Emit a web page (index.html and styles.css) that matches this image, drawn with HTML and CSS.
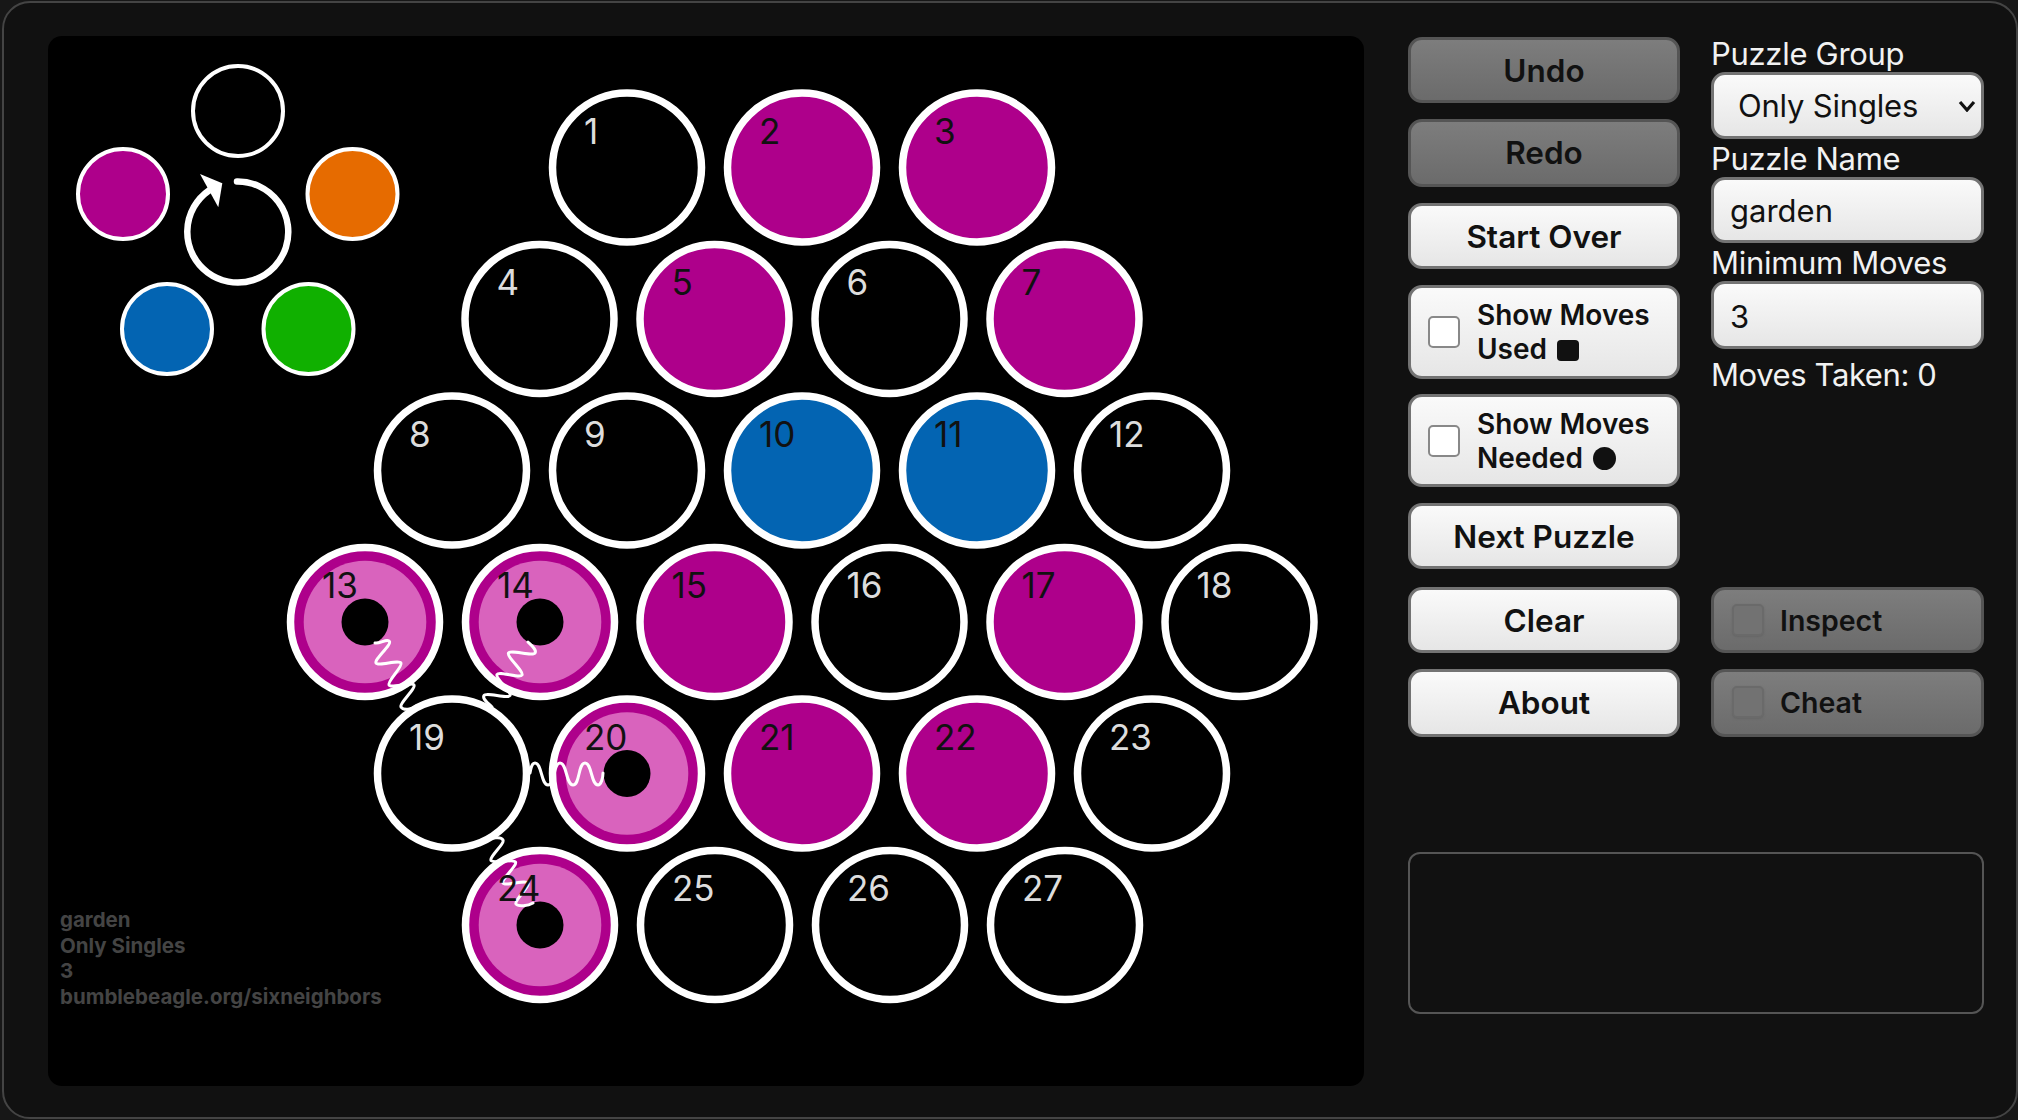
FILE: index.html
```html
<!DOCTYPE html>
<html lang="en">
<head>
  <meta charset="UTF-8">
  <title>Six Neighbors</title>
  <link rel="stylesheet" href="styles.css">
</head>
<body>
  <div class="ventana">
    <div class="tablero">
      <svg class="lienzo" viewBox="48 36 1316 1050" width="1316" height="1050">
        <!-- colour picker -->
        <circle class="paleta" cx="238" cy="111" r="45"/>
        <circle class="paleta magenta" cx="123" cy="194" r="45"/>
        <circle class="paleta naranja" cx="352.5" cy="194" r="45"/>
        <circle class="paleta azul" cx="167" cy="329" r="45"/>
        <circle class="paleta verde" cx="308.500" cy="329" r="45"/>
        <path class="giro" d="M237,181.500 A50.500,50.500 0 1 1 209,190.500"/>
        <polygon class="punta" points="200,174 222.300,183.300 218.300,207.300"/>

        <!-- cells -->
        <circle class="celda" cx="627" cy="167.500" r="74.500"/>
        <circle class="celda magenta" cx="802" cy="167.500" r="74.500"/>
        <circle class="celda magenta" cx="977" cy="167.500" r="74.500"/>
        <circle class="celda" cx="539.500" cy="319" r="74.500"/>
        <circle class="celda magenta" cx="714.500" cy="319" r="74.500"/>
        <circle class="celda" cx="889.500" cy="319" r="74.500"/>
        <circle class="celda magenta" cx="1064.500" cy="319" r="74.500"/>
        <circle class="celda" cx="452" cy="470.500" r="74.500"/>
        <circle class="celda" cx="627" cy="470.500" r="74.500"/>
        <circle class="celda azul" cx="802" cy="470.500" r="74.500"/>
        <circle class="celda azul" cx="977" cy="470.500" r="74.500"/>
        <circle class="celda" cx="1152" cy="470.500" r="74.500"/>
        <circle class="celda magenta" cx="365" cy="622" r="74.500"/>
        <circle class="celda magenta" cx="540" cy="622" r="74.500"/>
        <circle class="celda magenta" cx="714.500" cy="622" r="74.500"/>
        <circle class="celda" cx="889.500" cy="622" r="74.500"/>
        <circle class="celda magenta" cx="1064.500" cy="622" r="74.500"/>
        <circle class="celda" cx="1239.500" cy="622" r="74.500"/>
        <circle class="celda" cx="452" cy="773.500" r="74.500"/>
        <circle class="celda magenta" cx="627" cy="773.500" r="74.500"/>
        <circle class="celda magenta" cx="802" cy="773.500" r="74.500"/>
        <circle class="celda magenta" cx="977" cy="773.500" r="74.500"/>
        <circle class="celda" cx="1152" cy="773.500" r="74.500"/>
        <circle class="celda magenta" cx="540" cy="925" r="74.500"/>
        <circle class="celda" cx="715" cy="925" r="74.500"/>
        <circle class="celda" cx="890" cy="925" r="74.500"/>
        <circle class="celda" cx="1065" cy="925" r="74.500"/>

        <!-- marked cells -->
        <circle class="rosa" cx="365" cy="622" r="61.300"/>
        <circle class="hueco" cx="365" cy="622" r="23.500"/>
        <circle class="rosa" cx="540" cy="622" r="61.300"/>
        <circle class="hueco" cx="540" cy="622" r="23.500"/>
        <circle class="rosa" cx="627" cy="773.500" r="61.300"/>
        <circle class="hueco" cx="627" cy="773.500" r="23.500"/>
        <circle class="rosa" cx="540" cy="925" r="61.300"/>
        <circle class="hueco" cx="540" cy="925" r="23.500"/>

        <!-- links -->
        <path class="enlace" d="M375,643 C380,644 387.500,638 389.500,641.500 C391.500,645 374,659.500 376,663 C378,666.500 399,659.500 401,663 C403,666.500 387,681.500 389,685 C391,688.500 412,681.500 414,685 C416,688.500 399,703.500 401,707 C403,710.500 412,710 416,706"/>
        <path class="enlace" d="M528,642 C531,645 537,649.500 535,653 C533,656.500 510.500,649.500 508.500,653 C506.500,656.500 524,671.500 522,675 C520,678.500 499,671 497,674.500 C495,678 512,692 510,695.500 C508,699 486,692 484,695.500 C482,699 488,703 492,707"/>
        <path class="enlace" d="M530,773 C531,767 532,763 535,763 C542,763 541,785 548,785 C555,785 553,763 560,763 C567,763 566,785 573,785 C580,785 578,763 585,763 C592,763 591,785 598,785 C601,785 603,778 603,773"/>
        <path class="enlace" d="M493,838 C497,838 501,836.500 503,840 C505,843.500 489,857 491,860.500 C493,864 513.500,858.500 515.500,862 C517.500,865.500 501,879.500 503,883 C505,886.500 526,879.500 528,883 C530,886.500 514,900.500 516,904 C518,907 528,906 533,903"/>

        <!-- numbers -->
        <text class="num" x="584" y="143.500">1</text>
        <text class="num lleno" x="759" y="143.500">2</text>
        <text class="num lleno" x="934" y="143.500">3</text>
        <text class="num" x="496.500" y="295">4</text>
        <text class="num lleno" x="671.500" y="295">5</text>
        <text class="num" x="846.500" y="295">6</text>
        <text class="num lleno" x="1021.500" y="295">7</text>
        <text class="num" x="409" y="446.500">8</text>
        <text class="num" x="584" y="446.500">9</text>
        <text class="num lleno" x="759" y="446.500">10</text>
        <text class="num lleno" x="934" y="446.500">11</text>
        <text class="num" x="1109" y="446.500">12</text>
        <text class="num lleno" x="322" y="598">13</text>
        <text class="num lleno" x="497" y="598">14</text>
        <text class="num lleno" x="671.500" y="598">15</text>
        <text class="num" x="846.500" y="598">16</text>
        <text class="num lleno" x="1021.500" y="598">17</text>
        <text class="num" x="1196.500" y="598">18</text>
        <text class="num" x="409" y="749.500">19</text>
        <text class="num lleno" x="584" y="749.500">20</text>
        <text class="num lleno" x="759" y="749.500">21</text>
        <text class="num lleno" x="934" y="749.500">22</text>
        <text class="num" x="1109" y="749.500">23</text>
        <text class="num lleno" x="497" y="901">24</text>
        <text class="num" x="672" y="901">25</text>
        <text class="num" x="847" y="901">26</text>
        <text class="num" x="1022" y="901">27</text>

        <!-- caption -->
        <text class="pie" x="60" y="927">garden</text>
        <text class="pie" x="60" y="952.500">Only Singles</text>
        <text class="pie" x="60" y="978">3</text>
        <text class="pie" x="60" y="1003.500">bumblebeagle.org/sixneighbors</text>
      </svg>
    </div>

    <div class="lateral">
      <div class="columnas">
        <div class="botones">
          <button class="boton apagado">Undo</button>
          <button class="boton apagado alto">Redo</button>
          <button class="boton">Start Over</button>
          <label class="boton marcar doble">
            <input type="checkbox">
            <span>Show Moves<br>Used <i class="cuadro"></i></span>
          </label>
          <label class="boton marcar doble">
            <input type="checkbox">
            <span>Show Moves<br>Needed <i class="punto"></i></span>
          </label>
          <button class="boton sep">Next Puzzle</button>
          <button class="boton">Clear</button>
          <button class="boton alto">About</button>
        </div>

        <div class="datos">
          <div class="campo">
            <label>Puzzle Group</label>
            <div class="selector">
              <select>
                <option>Only Singles</option>
              </select>
              <svg class="flecha" viewBox="0 0 18 12" width="18" height="12">
                <path d="M2,2 L9,10 L16,2"/>
              </svg>
            </div>
          </div>
          <div class="campo">
            <label>Puzzle Name</label>
            <input type="text" value="garden">
          </div>
          <div class="campo">
            <label>Minimum Moves</label>
            <input class="alto" type="text" value="3">
          </div>
          <div class="tomados">Moves Taken: 0</div>

          <div class="extras">
            <label class="boton marcar apagado">
              <input type="checkbox" disabled>
              <span>Inspect</span>
            </label>
            <label class="boton marcar apagado alto">
              <input type="checkbox" disabled>
              <span>Cheat</span>
            </label>
          </div>
        </div>
      </div>

      <div class="mensaje"></div>
    </div>
  </div>
</body>
</html>
```

FILE: styles.css
```css
* {
  box-sizing: border-box;
}

html, body {
  margin: 0;
  height: 100%;
  overflow: hidden;
}

body {
  background: #171717;
  font-family: Inter, "Liberation Sans", sans-serif;
  color: #f2f2f2;
}

.ventana {
  display: flex;
  width: 2016px;
  height: 1118px;
  margin: 1px 0 0 2px;
  padding: 33px 0 0 44px;
  background: #111;
  border: 2px solid #444;
  border-radius: 28px;
}

.tablero {
  width: 1316px;
  height: 1050px;
  background: #000;
  border-radius: 14px;
  overflow: hidden;
}

.lienzo {
  display: block;
}

.paleta {
  fill: #000;
  stroke: #fff;
  stroke-width: 4;
}

.celda {
  fill: #000;
  stroke: #fff;
  stroke-width: 7.5;
}

.magenta {
  fill: #ae008b;
}

.naranja {
  fill: #e66b00;
}

.azul {
  fill: #0364b2;
}

.verde {
  fill: #10b000;
}

.giro {
  fill: none;
  stroke: #fff;
  stroke-width: 6.5;
  stroke-linecap: round;
}

.punta {
  fill: #fff;
}

.rosa {
  fill: #d963bd;
}

.hueco {
  fill: #000;
}

.enlace {
  fill: none;
  stroke: #fff;
  stroke-width: 3;
  stroke-linecap: round;
}

.num {
  fill: #ddd;
  font-size: 35px;
}

.num.lleno {
  fill: #111;
}

.pie {
  fill: #444;
  font-size: 20.5px;
  font-weight: 700;
}

.lateral {
  width: 576px;
  margin-left: 44px;
  padding-top: 1px;
}

.columnas {
  display: flex;
  gap: 31px;
}

.botones {
  display: flex;
  flex-direction: column;
  gap: 16px;
  width: 272px;
}

.boton {
  display: flex;
  align-items: center;
  justify-content: center;
  width: 100%;
  height: 66px;
  padding: 0;
  font-family: inherit;
  font-size: 31.5px;
  font-weight: 600;
  color: #111;
  background: linear-gradient(#fafafa, #e6e6e6);
  border: 3px solid #737373;
  border-radius: 14px;
}

.boton.alto {
  height: 68px;
  padding-bottom: 2px;
}

.boton.doble {
  height: 94px;
  font-size: 28px;
  line-height: 34px;
}

.boton.doble + .boton.doble {
  height: 93px;
  margin-top: -1px;
}

.boton.sep {
  margin-bottom: 2px;
}

.boton.apagado {
  background: linear-gradient(#7d7d7d, #6b6b6b);
  border-color: #555;
}

.marcar {
  justify-content: flex-start;
  padding-left: 17px;
  font-size: 28.5px;
}

.marcar input {
  appearance: none;
  flex: none;
  width: 32px;
  height: 32px;
  margin: 0 17px 0 0;
  background: #fff;
  border: 2px solid #888;
  border-radius: 5px;
}

.marcar input:disabled {
  background: #727272;
  border-color: #6a6a6a;
  box-shadow: 0 1px 2px #666;
}

.cuadro, .punto {
  display: inline-block;
  vertical-align: -2px;
  background: #111;
}

.cuadro {
  width: 22px;
  height: 21px;
  margin-left: 3px;
  border-radius: 4px;
}

.punto {
  width: 23px;
  height: 23px;
  margin-left: 3px;
  border-radius: 50%;
}

.datos {
  display: flex;
  flex-direction: column;
  width: 273px;
}

.campo + .campo {
  margin-top: 3px;
}

.campo label {
  display: block;
  height: 35px;
  font-size: 31px;
  line-height: 34px;
  letter-spacing: -0.3px;
}

.campo input, .campo select {
  display: block;
  width: 100%;
  height: 66px;
  padding: 0 16px;
  font-family: inherit;
  font-size: 31px;
  color: #111;
  background: linear-gradient(#fafafa, #e6e6e6);
  border: 3px solid #737373;
  border-radius: 14px;
  appearance: none;
}

.campo input.alto {
  height: 68px;
  padding-top: 2px;
}

.campo select {
  height: 67px;
  padding-left: 24px;
  letter-spacing: -0.2px;
}

.selector {
  position: relative;
}

.flecha {
  position: absolute;
  top: 28px;
  right: 8px;
  fill: none;
  stroke: #111;
  stroke-width: 3.2;
}

.tomados {
  margin-top: 8px;
  font-size: 31px;
  line-height: 36px;
  letter-spacing: -0.4px;
}

.extras {
  display: flex;
  flex-direction: column;
  gap: 16px;
  margin-top: auto;
}

.extras .marcar {
  padding-left: 18px;
}

.extras .marcar input {
  margin-right: 16px;
}

.mensaje {
  width: 576px;
  height: 162px;
  margin-top: 115px;
  border: 2px solid #555;
  border-radius: 12px;
}
```
